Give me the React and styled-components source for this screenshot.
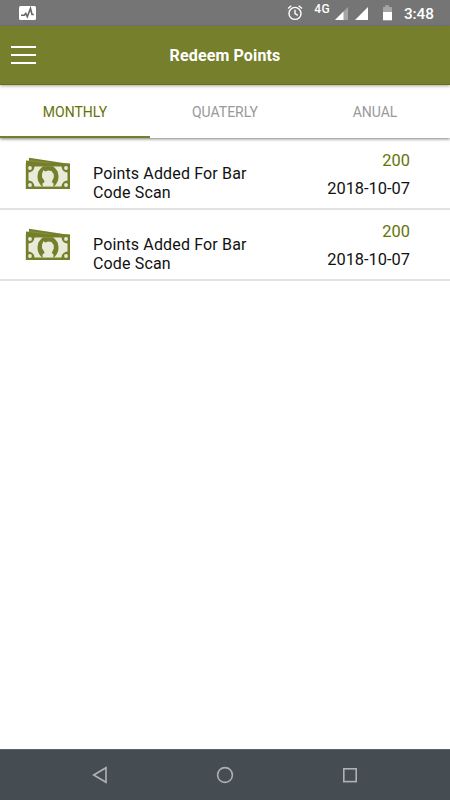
import React, { useState } from "react";
import styled, { createGlobalStyle, ThemeProvider } from "styled-components";

const theme = {
  primary: "#767f2b",
  primaryDark: "#667206",
  status: "#757575",
  textSoft: "#999",
  nav: "#454d52",
};

const GlobalStyle = createGlobalStyle`
  * {
    box-sizing: border-box;
  }
  body {
    margin: 0;
    background: #fff;
    font-family: Roboto, "Liberation Sans", sans-serif;
  }
`;

const Screen = styled.div`
  display: flex;
  flex-direction: column;
  width: 450px;
  height: 800px;
  overflow: hidden;
  background: #fff;
`;

const StatusBar = styled.div`
  display: flex;
  justify-content: space-between;
  flex: none;
  height: 26px;
  padding: 0 16px 0 19px;
  background: ${({ theme }) => theme.status};
`;

const StatusIcons = styled.div`
  display: flex;
  svg {
    display: block;
  }
`;

const Network = styled.span`
  width: 17px;
  margin: 2px 4px 0 11px;
  font-size: 12px;
  line-height: 14px;
  font-weight: 500;
  letter-spacing: 0.5px;
  color: #fff;
`;

const Clock = styled.span`
  margin-left: 11.6px;
  font-size: 15.3px;
  line-height: 28px;
  font-weight: 500;
  color: #fff;
`;

const Header = styled.header`
  display: grid;
  grid-template-columns: 36px 1fr 36px;
  align-items: center;
  flex: none;
  height: 59px;
  border-bottom: 1px solid ${({ theme }) => theme.primaryDark};
  background: ${({ theme }) => theme.primary};
  box-shadow: 0 1px 3px rgba(0, 0, 0, 0.35);
  z-index: 2;
`;

const MenuButton = styled.button`
  display: flex;
  flex-direction: column;
  gap: 6px;
  width: 36px;
  padding: 0 0 0 11px;
  border: none;
  background: none;
`;

const MenuLine = styled.span`
  width: 25px;
  height: 2px;
  background: #fff;
`;

const Title = styled.h1`
  margin: 0;
  padding-top: 2px;
  font-size: 16px;
  line-height: 20px;
  font-weight: 700;
  letter-spacing: 0.13px;
  text-align: center;
  color: #fff;
`;

const Tabs = styled.div`
  display: flex;
  flex: none;
  height: 53px;
  background: #fff;
  box-shadow: 0 1px 3px rgba(0, 0, 0, 0.5);
  z-index: 1;
`;

const Tab = styled.button`
  flex: 1;
  padding: 3px 0 0;
  border: none;
  border-bottom: 2px solid ${({ $active, theme }) => ($active ? theme.primary : "transparent")};
  background: none;
  font-family: inherit;
  font-size: 14px;
  color: ${({ $active, theme }) => ($active ? theme.primaryDark : theme.textSoft)};
`;

const List = styled.div`
  flex: 1;
  padding-top: 1px;
`;

const Row = styled.div`
  display: flex;
  height: 71px;
  padding: 0 40px 0 25px;
  border-bottom: 2px solid #e2e2e2;
`;

const MoneyIcon = styled.svg`
  flex: none;
  width: 46px;
  height: 33px;
  margin-top: 18px;
`;

const Description = styled.div`
  width: 170px;
  margin: 25px 0 0 22px;
  font-size: 16px;
  line-height: 19px;
  letter-spacing: 0.15px;
  color: #111;
`;

const Details = styled.div`
  display: flex;
  flex-direction: column;
  align-items: flex-end;
  gap: 9px;
  margin: 12px 0 0 auto;
  font-size: 16.4px;
  line-height: 19px;
`;

const Points = styled.span`
  color: ${({ theme }) => theme.primaryDark};
`;

const Date = styled.span`
  color: #111;
`;

const NavBar = styled.nav`
  display: flex;
  align-items: center;
  justify-content: space-between;
  flex: none;
  height: 51px;
  padding: 0 90px;
  border-top: 1px solid #5d6366;
  background: ${({ theme }) => theme.nav};
`;

const NavIcon = styled.svg`
  width: 20px;
  height: 20px;
  fill: none;
  stroke: #aeb2b4;
  stroke-width: 1.6;
`;

const tabs = ["MONTHLY", "QUATERLY", "ANUAL"];

const transactions = [
  { id: 1, desc: "Points Added For Bar Code Scan", points: 200, date: "2018-10-07" },
  { id: 2, desc: "Points Added For Bar Code Scan", points: 200, date: "2018-10-07" },
];

const Money = () => (
  <MoneyIcon viewBox="0 0 46 33">
    <path d="M4 .7 L45 7 H1 V3.5 L4 3.8Z" fill="#767f2b" />
    <path d="M4.3 3.6 L26 6.3" fill="none" stroke="#a3aa6b" strokeWidth=".4" />
    <rect x=".8" y="6.4" width="44.2" height="25.6" fill="#767f2b" />
    <path
      d="M9.5 9.5 H36.5 Q37 15 42.5 15.6 V23.4 Q37 24 36.5 29.5 H9.5 Q9 24 3.5 23.4 V15.6 Q9 15 9.5 9.5Z"
      fill="#e9ebd9"
    />
    <circle cx="5" cy="11" r="1.9" fill="#e9ebd9" />
    <circle cx="41" cy="11" r="1.9" fill="#e9ebd9" />
    <circle cx="5" cy="28" r="1.9" fill="#e9ebd9" />
    <circle cx="41" cy="28" r="1.9" fill="#e9ebd9" />
    <path d="M18.2 9.3 Q12.5 13 12.5 19.5 Q12.5 26 17.5 29.7 H28.5 Q33.5 26 33.5 19.5 Q33.5 13 27.8 9.3Z" fill="#767f2b" />
    <path
      d="M18.4 13.2 L20.5 14.6 L23 13.6 L26.5 14 L28.8 17.3 L28.8 20.5 L27.4 23.5 L26.8 25 L28.6 26.4 L28.2 29.5 H17.8 L17.4 26.4 L19.6 25 L19 23.2 L17 20.2 L17.1 16.5Z"
      fill="#e9ebd9"
    />
  </MoneyIcon>
);

const App = () => {
  const [active, setActive] = useState(0);

  return (
    <ThemeProvider theme={theme}>
      <GlobalStyle />
      <Screen>
        <StatusBar>
          <StatusIcons>
            <svg width="17" height="26" viewBox="0 0 17 26">
              <rect y="6" width="17" height="14" rx="1.5" fill="#fff" />
              <path d="M2 15.3 H5.2 L6.8 13.5 L8.3 16.8 L11.5 8.5 L13 14.5 H14.8" fill="none" stroke="#666" strokeWidth="1.6" />
            </svg>
          </StatusIcons>
          <StatusIcons>
            <svg width="16" height="26" viewBox="0 0 16 26" fill="none" stroke="#fff" strokeWidth="1.4">
              <circle cx="8" cy="13.4" r="6" />
              <path d="M8 9.7 V13.7 L10.8 15.4 M1 8.5 L4.3 5.7 M15 8.5 L11.7 5.7" />
            </svg>
            <Network>4G</Network>
            <svg width="13" height="26" viewBox="0 0 13 26">
              <path d="M0 20 L13 7 V20Z" fill="#a5a5a5" />
              <path d="M0 20 L8.5 11.5 V20Z" fill="#fff" />
            </svg>
            <svg width="20" height="26" viewBox="0 0 20 26">
              <path d="M7 20 L20 7 V20Z" fill="#fff" />
            </svg>
            <svg width="24" height="26" viewBox="0 0 24 26">
              <path d="M15 12 V7 H17.2 V5.2 H21 V7 H24 V12Z" fill="#a5a5a5" />
              <path d="M15 12 H24 V20.3 H15Z" fill="#fff" />
            </svg>
            <Clock>3:48</Clock>
          </StatusIcons>
        </StatusBar>
        <Header>
          <MenuButton aria-label="Menu">
            <MenuLine />
            <MenuLine />
            <MenuLine />
          </MenuButton>
          <Title>Redeem Points</Title>
        </Header>
        <Tabs>
          {tabs.map((tab, i) => (
            <Tab key={tab} $active={i === active} onClick={() => setActive(i)}>
              {tab}
            </Tab>
          ))}
        </Tabs>
        <List>
          {transactions.map((item) => (
            <Row key={item.id}>
              <Money />
              <Description>{item.desc}</Description>
              <Details>
                <Points>{item.points}</Points>
                <Date>{item.date}</Date>
              </Details>
            </Row>
          ))}
        </List>
        <NavBar>
          <NavIcon viewBox="0 0 20 20">
            <path d="M3.7 10 L16 2.7 V17.3Z" />
          </NavIcon>
          <NavIcon viewBox="0 0 20 20">
            <circle cx="10" cy="10" r="7.4" />
          </NavIcon>
          <NavIcon viewBox="0 0 20 20">
            <rect x="3.8" y="3.8" width="12.4" height="12.8" />
          </NavIcon>
        </NavBar>
      </Screen>
    </ThemeProvider>
  );
};

export default App;
